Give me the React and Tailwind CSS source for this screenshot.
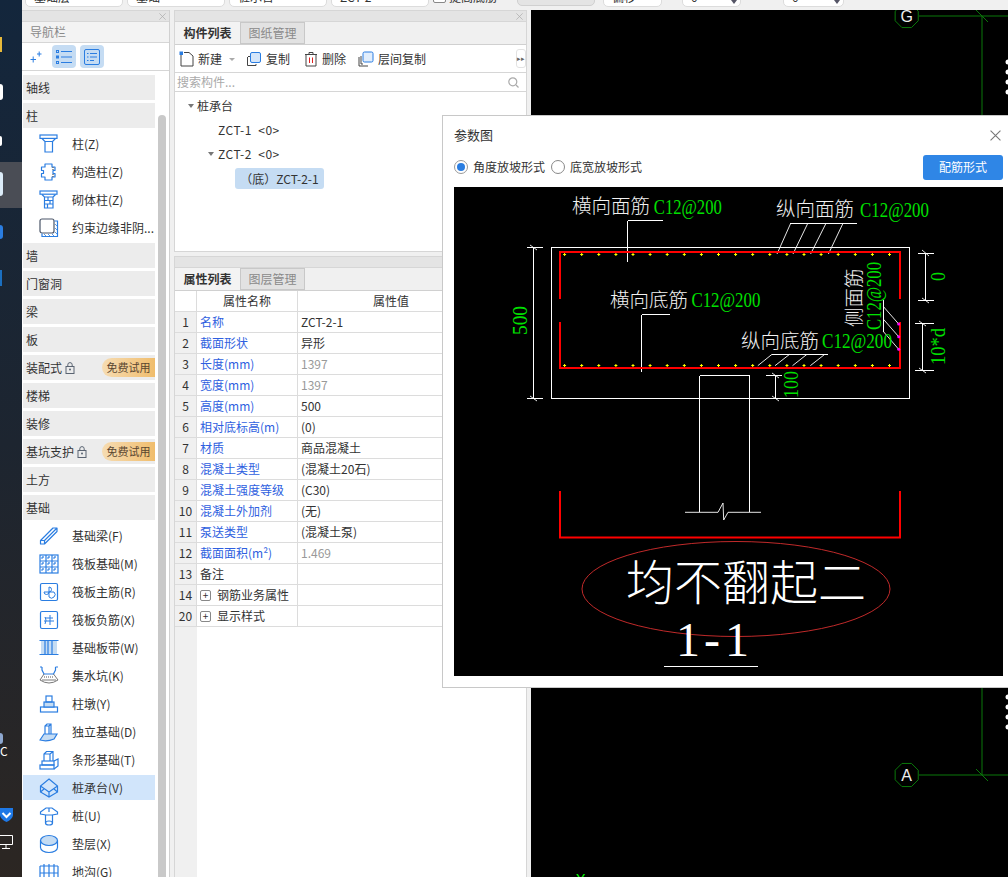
import React from "react";

const CN = "[font-family:'Noto_Sans_CJK_SC','Noto_Sans',sans-serif]";
const B = "#2a7de1";

const Svg = ({ children }) => (
  <svg width="20" height="20" viewBox="0 0 20 20" fill="none" stroke={B} strokeWidth="1.2" className="shrink-0">
    {children}
  </svg>
);

const icons = {
  zhu: (
    <Svg>
      <rect x="1" y="1" width="17" height="3.4" />
      <path d="M3 4.5 L6 7.5 V18 H13.5 V7.5 L16.5 4.5 M6 7.5 H13.5" />
    </Svg>
  ),
  gouzao: (
    <Svg>
      <path d="M6 2 H13 V5 H16 V8.5 H14 V11.5 H16 V15 H13 V18 H6 V15 H2.5 V11.5 H4.5 V8.5 H2.5 V5 H6 Z" strokeLinejoin="round" />
      <path d="M14 5 V8 M14 12 V15" stroke="#555" strokeDasharray="1 1" />
    </Svg>
  ),
  qiti: (
    <Svg>
      <rect x="1" y="1" width="17" height="3.2" />
      <path d="M3 4.5 L5.5 7 V18 H14 V7 L16.5 4.5 M5.5 7 H14 M5.5 10.5 H14 M5.5 14 H14 M9 7 V10.5 M11 10.5 V14 M8.5 14 V18" />
    </Svg>
  ),
  yueshu: (
    <Svg>
      <rect x="1" y="1" width="14" height="14" rx="2" stroke="#4a5568" />
      <path d="M15.5 3 H18.5 V18.5 H3 V15.5" />
      <path d="M16 6 L18 8 M16 10 L18 12 M16 14 L18 16 M5 16 L7 18 M9 16 L11 18 M13 16 L15 18" strokeWidth="0.8" />
    </Svg>
  ),
  liang: (
    <Svg>
      <path d="M1.5 14.5 L14 2 L18 2 L18 5.5 L5.5 18 H1.5 Z M1.5 14.5 H5.5 V18 M5.5 14.5 L18 2 M6 10 L12 4" strokeLinejoin="round" />
    </Svg>
  ),
  fa: (
    <Svg>
      <rect x="1" y="1" width="18" height="18" />
      <path d="M1 7 H19 M1 13 H19 M7 1 V19 M13 1 V19" />
      <path d="M4 1 V19 M10 1 V19 M16 1 V19 M1 4 H19 M1 10 H19 M1 16 H19" strokeDasharray="2 4" strokeDashoffset="-1" />
    </Svg>
  ),
  zhu2: (
    <Svg>
      <rect x="1.5" y="1.5" width="17" height="17" rx="1.5" />
      <path d="M10 5 V15 M5 10 H15 M10 5 A2.5 2.5 0 0 1 10 10 M10 10 A2.5 2.5 0 0 1 5 10 M15 10 A2.5 2.5 0 0 1 10 15" strokeWidth="1" />
    </Svg>
  ),
  fu: (
    <Svg>
      <rect x="1.5" y="1.5" width="17" height="17" rx="1.5" />
      <path d="M11 5 V15 M6 8 H14 M5 11 H15 M6 7 Q8 10 6 14" strokeWidth="1" />
    </Svg>
  ),
  dai: (
    <Svg>
      <rect x="2" y="3" width="16" height="13" fill="#c5dcf3" stroke="none" />
      <path d="M0.5 2.5 H19.5 M0.5 16.5 H19.5 M6 3 V16 M9 3 V16 M13 3 V16" />
    </Svg>
  ),
  keng: (
    <Svg>
      <path d="M3 1 V4 L5 8 H14.5 L16.5 4 V1 M3 1 H1 M16.5 1 H19" />
      <path d="M5 8 L1 14 M14.5 8 L19 14 M1 14 Q10 20 19 14 M3 14 H17" stroke="#555" strokeWidth="0.8" />
      <path d="M5 11 H15" stroke="#555" strokeDasharray="1 1" />
    </Svg>
  ),
  dun: (
    <Svg>
      <rect x="1.5" y="13" width="17" height="5" />
      <rect x="5" y="8" width="10" height="5" fill="#c5dcf3" />
      <rect x="7" y="2" width="6" height="6" />
    </Svg>
  ),
  duli: (
    <Svg>
      <path d="M6 12 V4 L8 2 H12 V12 M6 4 H10 V12 M10 4 L12 2" />
      <path d="M1 18 L5 12 H18 L15 17 Q8 20 1 18 Z" fill="#c5dcf3" />
    </Svg>
  ),
  tiao: (
    <Svg>
      <path d="M5 11 V4 L7.5 1.5 H14 V11 M5 4 H11 V11 M11 4 L14 1.5" />
      <rect x="3" y="11" width="12" height="4" />
      <rect x="1" y="15" width="14" height="4" />
      <path d="M15 11 L19 9 V16 L15 19" />
    </Svg>
  ),
  cheng: (
    <Svg>
      <path d="M10 1 L18.5 8 V14 L10 19 L1.5 14 V8 Z M1.5 8 L10 14 L18.5 8 M10 14 V19.5" />
      <path d="M1.5 14 L5 11 M18.5 14 L15 11" />
    </Svg>
  ),
  zhuang: (
    <Svg>
      <path d="M1.5 6 L7 2 H13 L18.5 6 V8 L13 9 H7 L1.5 8 Z M10 2 V6" />
      <path d="M6.5 9 V17 M13.5 9 V17" />
      <ellipse cx="10" cy="17" rx="3.5" ry="2" />
    </Svg>
  ),
  dian: (
    <Svg>
      <ellipse cx="10" cy="6.5" rx="8.5" ry="5" fill="#c5dcf3" />
      <path d="M1.5 6.5 V13.5 C1.5 16 5 18.5 10 18.5 C15 18.5 18.5 16 18.5 13.5 V6.5" />
    </Svg>
  ),
  gou: (
    <Svg>
      <path d="M1 4 H19 M1 4 V19 M19 4 V19 M1 11 H19 M5 2 V19 M10 2 V19 M15 2 V19" />
    </Svg>
  ),
};

const nav = [
  { h: "轴线" },
  { h: "柱" },
  { t: "柱(Z)", i: "zhu" },
  { t: "构造柱(Z)", i: "gouzao" },
  { t: "砌体柱(Z)", i: "qiti" },
  { t: "约束边缘非阴...", i: "yueshu" },
  { h: "墙" },
  { h: "门窗洞" },
  { h: "梁" },
  { h: "板" },
  { h: "装配式", trial: true },
  { h: "楼梯" },
  { h: "装修" },
  { h: "基坑支护", trial: true },
  { h: "土方" },
  { h: "基础" },
  { t: "基础梁(F)", i: "liang" },
  { t: "筏板基础(M)", i: "fa" },
  { t: "筏板主筋(R)", i: "zhu2" },
  { t: "筏板负筋(X)", i: "fu" },
  { t: "基础板带(W)", i: "dai" },
  { t: "集水坑(K)", i: "keng" },
  { t: "柱墩(Y)", i: "dun" },
  { t: "独立基础(D)", i: "duli" },
  { t: "条形基础(T)", i: "tiao" },
  { t: "桩承台(V)", i: "cheng", active: true },
  { t: "桩(U)", i: "zhuang" },
  { t: "垫层(X)", i: "dian" },
  { t: "地沟(G)", i: "gou" },
];

const props = [
  ["1", "名称", "ZCT-2-1", 1],
  ["2", "截面形状", "异形", 1],
  ["3", "长度(mm)", "1397", 1, true],
  ["4", "宽度(mm)", "1397", 1, true],
  ["5", "高度(mm)", "500", 1],
  ["6", "相对底标高(m)", "(0)", 1],
  ["7", "材质", "商品混凝土", 1],
  ["8", "混凝土类型", "(混凝土20石)", 1],
  ["9", "混凝土强度等级", "(C30)", 1],
  ["10", "混凝土外加剂", "(无)", 1],
  ["11", "泵送类型", "(混凝土泵)", 1],
  ["12", "截面面积(m²)", "1.469", 1, true],
  ["13", "备注", "", 0],
  ["14", "钢筋业务属性", "", 0, false, true],
  ["20", "显示样式", "", 0, false, true],
];

const Lock = () => (
  <svg width="10" height="12" viewBox="0 0 10 12" fill="none" stroke="#5a6472" strokeWidth="1" className="ml-[3px]">
    <rect x="1" y="4.5" width="8" height="7" />
    <path d="M2.8 4.5 V2.8 A2.2 2.2 0 0 1 7.2 2.8 V4.5" />
    <circle cx="5" cy="7.5" r="1" fill="#5a6472" stroke="none" />
  </svg>
);

const NavRow = ({ row }) => {
  if (row.h) {
    return (
      <div className="mb-[3px] flex h-[25px] items-center bg-[#ececec] pl-[3px] text-[12px] text-[#333]">
        <span>{row.h}</span>
        {row.trial && <Lock />}
        {row.trial && (
          <span className="ml-auto flex h-[19px] w-[53px] items-center justify-center rounded-l-full bg-gradient-to-r from-[#f6dcb2] to-[#f0bd6c] text-[11px] text-[#5a4630]">
            免费试用
          </span>
        )}
      </div>
    );
  }
  return (
    <div className={`mb-[3px] flex h-[25px] items-center pl-[16px] text-[12px] text-[#333] ${row.active ? "bg-[#d1e5fb]" : ""}`}>
      {icons[row.i]}
      <span className="ml-[13px] whitespace-nowrap">{row.t}</span>
    </div>
  );
};

const X = ({ size = 10, color = "#aaa" }) => (
  <svg width={size} height={size} viewBox="0 0 10 10" stroke={color} strokeWidth="1">
    <path d="M0.5 0.5 L9.5 9.5 M9.5 0.5 L0.5 9.5" />
  </svg>
);

const Strip = () => (
  <div className="flex h-[12px] items-center justify-end border-y border-[#d6d6d6] bg-[#e4e4e4] pr-[3px]">
    <X size={7} />
  </div>
);

const Tabs = ({ a, b }) => (
  <div className="flex h-[23px] border-b border-[#d0d0d0] bg-[#f0f0f0] text-[12px]">
    <div className="flex w-[65px] items-center justify-center bg-[#f3f3f3] font-bold text-[#333]">{a}</div>
    <div className="flex w-[65px] items-center justify-center border border-[#c8c8c8] bg-[#e2e2e2] text-[#8a8a8a]">{b}</div>
  </div>
);

const TBtn = ({ icon, label, className = "" }) => (
  <div className={`flex items-center text-[12px] text-[#333] ${className}`}>
    {icon}
    <span className="ml-[4px]">{label}</span>
  </div>
);

const CopyIcon = (
  <svg width="16" height="16" viewBox="0 0 16 16" fill="none" strokeWidth="1">
    <path d="M2 5.5 H4 M1.5 6 V14.5 H10 V13" stroke="#444" />
    <rect x="4.5" y="1.5" width="10" height="10" rx="1.5" fill="#d5e6fa" stroke={B} />
  </svg>
);

const FloorCopy = (
  <svg width="16" height="16" viewBox="0 0 16 16" fill="none" strokeWidth="1">
    <path d="M1 6 V15 H10 M3 5 V13 H5" stroke="#444" />
    <rect x="5" y="1" width="10" height="10" rx="1.5" fill="#e2eefc" stroke={B} />
  </svg>
);

const CadText = ({ x, y, len, size = 21, rot, children, fill = "#00e000" }) => (
  <text
    x={x}
    y={y}
    fill={fill}
    fontSize={size}
    fontFamily="'Liberation Serif', serif"
    textLength={len}
    lengthAdjust="spacingAndGlyphs"
    transform={rot ? `rotate(-90 ${x} ${y})` : undefined}
  >
    {children}
  </text>
);

const CnText = ({ x, y, rot, size = 19.5, children }) => (
  <text
    x={x}
    y={y}
    fill="#f2f2f2"
    fontSize={size}
    fontWeight="300"
    fontFamily="'Noto Sans CJK SC', sans-serif"
    transform={rot ? `rotate(-90 ${x} ${y})` : undefined}
  >
    {children}
  </text>
);

const dots = Array.from({ length: 20 }, (_, i) => 564.6 + i * 17.1);

const Drawing = () => (
  <svg className="block h-[489px] w-[549px] bg-black" viewBox="454 187 549 489">
    <g stroke="#fff" strokeWidth="1" fill="none" shapeRendering="crispEdges">
      <rect x="551.5" y="247.5" width="358" height="151" />
      <path d="M627.5 220.5 H663 M627.5 220.5 V262" />
      <path d="M790 223.5 H857" />
      <path d="M641.5 314.5 H670 M641.5 314.5 V372" />
      <path d="M772 354.5 H828" />
      <path d="M883.5 300 V332" />
      <path d="M533.5 247 V398 M527 247.5 H543 M527 398.5 H543" />
      <path d="M925.5 253 V300 M918 253.5 H934 M918 300.5 H934" />
      <path d="M922.5 323 V371 M915 323.5 H934 M915 370.5 H934" />
      <path d="M775.5 375 V398 M766 375.5 H782" />
      <path d="M699.5 375.5 H750 M699.5 375.5 V512 M749.5 375.5 V512" />
      <path d="M664 666.5 H758" />
    </g>
    <g stroke="#fff" strokeWidth="0.9" fill="none">
      <path d="M790.7 223.3 L777 254 M807.8 223.3 L793 254 M826 223.3 L810.6 254 M843 223.3 L828.4 254" />
      <path d="M772 354.3 L757.8 365.7 M789.6 354.3 L775 365.7 M807 354.3 L792.5 365.7 M824.8 354.3 L810.3 365.7" />
      <path d="M883.5 306.7 L898.7 324 M883.5 319.3 L898.7 336.7 M883.5 331.7 L898.7 349.3" />
      <path d="M530 245 L537 250 M530 396 L537 401 M922 250 L929 256 M922 298 L929 303 M919 321 L926 326 M919 368 L926 373 M772 373 L779 378 M772 396 L779 401" />
      <path d="M685 512.3 H718 L723 503 L723.7 520 L728 512.3 H761" />
    </g>
    <g stroke="#ff0000" strokeWidth="2" fill="none">
      <path d="M560 299 V252 H900 V299" />
      <path d="M560 322 V368 H900 V322" />
      <path d="M560 491 V537.5 H900 V491" />
    </g>
    {dots.map((x) => (
      <g key={x} stroke="#ffff00" strokeWidth="1">
        <path d={`M${x - 1.5} 254.5 H${x + 1.5} M${x} 253 V256`} />
        <path d={`M${x - 1.5} 365.5 H${x + 1.5} M${x} 364 V367`} />
      </g>
    ))}
    <circle cx="898.7" cy="324" r="1.5" fill="#ff00ff" />
    <circle cx="898.7" cy="336.7" r="1.5" fill="#ff00ff" />
    <circle cx="898.7" cy="349.3" r="1.5" fill="#ff00ff" />
    <ellipse cx="736" cy="589" rx="154" ry="47.5" fill="none" stroke="#c02a2a" strokeWidth="1" />

    <CnText x={572} y={213}>横向面筋</CnText>
    <CadText x={653.8} y={214} len={68}>C12@200</CadText>
    <CnText x={776} y={216}>纵向面筋</CnText>
    <CadText x={860} y={217} len={69}>C12@200</CadText>
    <CnText x={610} y={307}>横向底筋</CnText>
    <CadText x={691.4} y={307} len={69}>C12@200</CadText>
    <CnText x={741} y={348}>纵向底筋</CnText>
    <CadText x={822} y={348} len={70}>C12@200</CadText>
    <CnText x={861} y={327} rot>侧面筋</CnText>
    <CadText x={881} y={330} len={68} rot>C12@200</CadText>
    <CadText x={527} y={335} len={29} rot>500</CadText>
    <CadText x={945} y={281} len={9} rot>0</CadText>
    <CadText x={945} y={365} len={37} rot>10*d</CadText>
    <CadText x={798} y={398} len={27} rot>100</CadText>

    <text x={626} y={600} fill="#fff" fontSize="48" fontWeight="300" textLength={240} fontFamily="'Noto Sans CJK SC', sans-serif">均不翻起二</text>
    <text x="676 704 725" y={656} fill="#fff" fontSize="48" fontFamily="'Liberation Serif', serif">1-1</text>
  </svg>
);

const Axis = ({ cy, label }) => (
  <>
    <polygon
      points={[0, 1, 2, 3, 4, 5, 6, 7]
        .map((i) => {
          const a = (Math.PI / 4) * i + Math.PI / 8;
          return `${906.7 + 12.5 * Math.cos(a)},${cy + 12.5 * Math.sin(a)}`;
        })
        .join(" ")}
      fill="none"
      stroke="#0a780a"
      strokeWidth="1"
    />
    <path d={`M919 ${cy} H1008 M976 ${cy - 6} L988 ${cy + 6}`} stroke="#0a780a" strokeWidth="1" />
    <text x="906.7" y={cy + 6} fill="#eee" fontSize="16" textAnchor="middle" fontFamily="'Liberation Sans', sans-serif">
      {label}
    </text>
  </>
);

const Canvas = () => (
  <div className="min-w-0 flex-1 bg-black">
    <svg className="block h-[867px] w-[477px]" viewBox="531 10 477 867">
      <Axis cy={16} label="G" />
      <Axis cy={775} label="A" />
      <path d="M982 16 V775" stroke="#0a780a" strokeWidth="1" />
      {[62, 72, 82, 92, 697, 707, 717, 727].map((y) => (
        <circle key={y} cx="1008" cy={y} r="2.5" fill="#fff" />
      ))}
      <text x="576" y="884" fill="#00ff00" fontSize="14" fontFamily="'Liberation Sans', sans-serif">Y</text>
    </svg>
  </div>
);

const Field = ({ w, arrow, children }) => (
  <div className={`relative flex h-[22px] shrink-0 items-end overflow-hidden rounded-b-[5px] border border-[#dcdcdc] bg-white pl-[8px] text-[12px] leading-[18px] text-[#333] ${w}`}>
    {children}
    {arrow && <span className="absolute right-[3px] top-[14px] h-0 w-0 border-x-[3px] border-t-[4px] border-x-transparent border-t-[#556]" />}
  </div>
);

const Clipped = ({ w, children }) => (
  <div className={`flex h-[22px] shrink-0 items-end overflow-hidden pl-[3px] text-[12px] leading-[18px] text-[#555] ${w}`}>
    <span className="mb-[4px] whitespace-nowrap">{children}</span>
  </div>
);

const Desktop = () => (
  <div className="relative w-[22px] shrink-0 overflow-hidden bg-gradient-to-b from-[#13263c] via-[#1d2530] to-[#2c2622]">
    <div className="absolute left-0 top-[37px] h-[15px] w-[2px] bg-[#e8b93a]" />
    <div className="absolute left-0 top-[84px] h-[16px] w-[3px] rounded-r bg-white" />
    <div className="absolute left-0 top-[136px] h-[10px] w-[2px] rounded-r bg-white" />
    <div className="absolute top-[162px] h-[46px] w-full bg-[#4a4d55]" />
    <div className="absolute left-0 top-[172px] h-[24px] w-[3px] rounded-r bg-[#dcecf8]" />
    <div className="absolute left-0 top-[225px] h-[14px] w-[3px] rounded-r bg-[#2a7de1]" />
    <div className="absolute left-0 top-[270px] h-[16px] w-[2px] bg-[#1b6fc0]" />
    <div className="absolute left-0 top-[733px] h-[11px] w-[3px] rounded-r bg-[#8da7cf]" />
    <span className="absolute left-0 top-[744px] text-[12px] leading-[14px] text-white">C</span>
    <svg className="absolute left-[-1px] top-[806px]" width="15" height="17" viewBox="0 0 15 17">
      <path d="M1 2 H14 V9 C14 12 10 15 7.5 16 C5 15 1 12 1 9 Z" fill="#1e78e6" />
      <path d="M3.5 7 L7.5 11 L11.5 7" stroke="#fff" strokeWidth="2" fill="none" />
    </svg>
    <svg className="absolute left-0 top-[834px]" width="14" height="16" viewBox="0 0 14 16" fill="none" stroke="#fff" strokeWidth="1">
      <path d="M0 1.5 H12.5 V10.5 H0 M6 11 V14 M2 14.5 H10" />
    </svg>
  </div>
);

const NavPanel = () => (
  <div className="relative flex w-[148px] shrink-0 flex-col overflow-hidden border-r border-[#d0d0d0] bg-white">
    <Strip />
    <div className="flex h-[21px] items-center border-b border-[#d6d6d6] bg-[#f3f3f3] pl-[8px] text-[12px] text-[#8a8a8a]">导航栏</div>
    <div className="flex h-[28px] items-center border-b border-[#d6d6d6] bg-white pl-[8px]">
      <svg width="12" height="12" viewBox="0 0 12 12" stroke={B} strokeWidth="1">
        <path d="M0.5 8.5 H6 M3.2 5.5 V11.5 M7 3 H11.5 M9.2 0.5 V5.5" />
      </svg>
      <div className="ml-[10px] flex h-[23px] w-[24px] items-center justify-center rounded-[4px] bg-[#c5dcf3]">
        <svg width="16" height="14" viewBox="0 0 16 14" fill="none" stroke={B} strokeWidth="1">
          <path d="M5 1.5 H16 M5 7 H16 M5 12.5 H16" />
          <rect x="0.5" y="0.5" width="2" height="2" />
          <rect x="0.5" y="6" width="2" height="2" />
          <rect x="0.5" y="11.5" width="2" height="2" />
        </svg>
      </div>
      <div className="ml-[4px] flex h-[23px] w-[24px] items-center justify-center rounded-[4px] bg-[#c5dcf3]">
        <svg width="16" height="16" viewBox="0 0 16 16" fill="none" stroke={B} strokeWidth="1">
          <rect x="0.5" y="0.5" width="15" height="15" rx="1.5" />
          <path d="M3 4.5 H4.5 M6 4.5 H13 M3 8 H4.5 M6 8 H13 M3 11.5 H4.5 M6 11.5 H10" />
        </svg>
      </div>
    </div>
    <div className="mt-[4px] w-[133px] pl-[1px]">
      {nav.map((row) => (
        <NavRow key={row.h || row.t} row={row} />
      ))}
    </div>
    <div className="absolute bottom-0 left-[136px] top-[105px] w-[8px] rounded-t-full bg-[#c9c9c9]" />
  </div>
);

const PropRow = ({ p }) => (
  <div className="flex h-[21px] border-b border-[#dcdcdc] text-[12px]">
    <div className="flex w-[22px] items-center justify-center border-r border-[#dcdcdc] bg-[#f0f0f0] text-[#333]">{p[0]}</div>
    <div className={`flex w-[101px] items-center border-r border-[#dcdcdc] pl-[3px] ${p[3] ? "text-[#2f5fe0]" : "text-[#333]"}`}>
      {p[5] && (
        <span className="mr-[6px] flex h-[11px] w-[11px] items-center justify-center rounded-[2px] border border-[#888] text-[10px] leading-none">+</span>
      )}
      {p[1]}
    </div>
    <div className={`flex flex-1 items-center pl-[3px] ${p[4] ? "text-[#999]" : "text-[#333]"}`}>{p[2]}</div>
  </div>
);

const MidPanel = () => (
  <div className="ml-[4px] flex w-[353px] shrink-0 flex-col">
    <div className="flex h-[242px] flex-col border-x border-b border-[#d6d6d6] bg-white">
      <Strip />
      <Tabs a="构件列表" b="图纸管理" />
      <div className="flex h-[28px] shrink-0 items-center border-b border-[#d6d6d6] pl-[4px]">
        <TBtn
          label="新建"
          icon={
            <svg width="15" height="16" viewBox="0 0 15 16" fill="none">
              <path d="M2 4 V15 H14 V5 L10 1.5 H5" stroke="#444" />
              <rect x="0.5" y="0.5" width="3.5" height="3.5" fill="#2a7de1" />
            </svg>
          }
        />
        <span className="ml-[7px] mt-[1px] h-0 w-0 border-x-[3px] border-t-[3px] border-x-transparent border-t-[#aaa]" />
        <TBtn label="复制" icon={CopyIcon} className="ml-[11px]" />
        <TBtn
          label="删除"
          className="ml-[14px]"
          icon={
            <svg width="14" height="16" viewBox="0 0 14 16" fill="none" stroke="#444">
              <path d="M1 3.5 H13 M5 3.5 V1.5 H9 V3.5 M2 3.5 V15 H12 V3.5" />
              <path d="M5.5 6.5 V12 M8.5 6.5 V12" stroke="#e02020" />
            </svg>
          }
        />
        <TBtn label="层间复制" icon={FloorCopy} className="ml-[12px]" />
        <div className="ml-auto flex h-[19px] w-[10px] items-center justify-center rounded-[3px] border border-[#e2e2e2] text-[7px] text-[#666]">▸▸</div>
      </div>
      <div className="flex h-[19px] shrink-0 items-center justify-between border-b border-[#d6d6d6] pl-[2px] pr-[7px] text-[12px] text-[#aaa]">
        <span>搜索构件...</span>
        <svg width="11" height="11" viewBox="0 0 11 11" fill="none" stroke="#aaa" strokeWidth="1.2">
          <circle cx="4.8" cy="4.8" r="4" />
          <path d="M8 8 L10.5 10.5" />
        </svg>
      </div>
      <div className="pt-[2px] text-[12px] text-[#333]">
        <div className="flex h-[24px] items-center pl-[13px]">
          <span className="mr-[3px] h-0 w-0 border-x-[3px] border-t-[4px] border-x-transparent border-t-[#777]" />
          桩承台
        </div>
        <div className="flex h-[24px] items-center pl-[43px] tracking-[0.5px]">ZCT-1&nbsp; &lt;0&gt;</div>
        <div className="flex h-[24px] items-center pl-[33px] tracking-[0.5px]">
          <span className="mr-[4px] h-0 w-0 border-x-[3px] border-t-[4px] border-x-transparent border-t-[#777]" />
          ZCT-2&nbsp; &lt;0&gt;
        </div>
        <div className="ml-[60px] mt-[2px] flex h-[21px] w-[89px] items-center justify-center rounded-[3px] bg-[#c5dcf3]">（底）ZCT-2-1</div>
      </div>
    </div>
    <div className="mt-[4px] flex flex-1 flex-col border-x border-[#d6d6d6] bg-white">
      <Strip />
      <Tabs a="属性列表" b="图层管理" />
      <div className="flex h-[21px] border-b border-[#dcdcdc] text-[12px] text-[#333]">
        <div className="w-[22px] border-r border-[#dcdcdc]" />
        <div className="flex w-[101px] items-center justify-center border-r border-[#dcdcdc]">属性名称</div>
        <div className="flex w-[186px] items-center justify-center">属性值</div>
      </div>
      {props.map((p) => (
        <PropRow key={p[0]} p={p} />
      ))}
      <div className="w-[22px] flex-1 bg-[#f0f0f0]" />
    </div>
  </div>
);

const Radio = ({ on, label }) => (
  <div className="flex items-center">
    <span className={`flex h-[14px] w-[14px] items-center justify-center rounded-full border ${on ? "border-[#999]" : "border-[#888]"}`}>
      {on && <span className="h-[8px] w-[8px] rounded-full bg-[#2a7de1]" />}
    </span>
    <span className="ml-[5px]">{label}</span>
  </div>
);

const ParamDialog = () => (
  <div className="absolute left-[442px] top-[115px] h-[573px] w-[566px] border-y border-l border-[#c8c8c8] bg-white pl-[11px] pr-[5px] text-[12px] text-[#333]">
    <div className="flex h-[38px] items-center justify-between pr-[2px]">
      <span className="text-[13px]">参数图</span>
      <X size={11} color="#777" />
    </div>
    <div className="mb-[7px] flex h-[26px] items-center">
      <Radio on label="角度放坡形式" />
      <div className="ml-[6px]">
        <Radio label="底宽放坡形式" />
      </div>
      <div className="ml-auto flex h-[25px] w-[80px] items-center justify-center rounded-[3px] bg-[#2f86e6] text-white">配筋形式</div>
    </div>
    <Drawing />
  </div>
);

const TopBar = () => (
  <div className="flex h-[10px] items-end overflow-hidden bg-[#f0f0f0] pb-[3px] pl-[3px]">
    <div className="flex items-end gap-[4px]">
      <Field w="w-[98px]">基础层</Field>
      <Field w="w-[98px]">基础</Field>
      <Field w="w-[98px]">桩承台</Field>
      <Field w="w-[98px]">ZCT-2</Field>
      <div className="flex h-[22px] w-[80px] shrink-0 items-end gap-[3px] text-[12px] leading-[18px] text-[#333]">
        <span className="mb-[4px] h-[14px] w-[13px] shrink-0 rounded-[2px] border border-[#888] bg-white" />
        <span className="mb-[1px] whitespace-nowrap">提高底筋</span>
      </div>
      <div className="mb-[1px] h-[22px] w-[78px] shrink-0 rounded-b-[5px] border border-[#d0d0d0] bg-[#e4e4e4]" />
      <div className="ml-[4px]">
        <Field w="w-[59px]">偏移</Field>
      </div>
      <Clipped w="w-[12px]">上</Clipped>
      <Field w="w-[59px]" arrow>0</Field>
      <Clipped w="w-[34px]">左偏移</Clipped>
      <Field w="w-[61px]" arrow>0</Field>
      <Clipped w="w-[40px]">右偏移</Clipped>
    </div>
  </div>
);

export default function App() {
  return (
    <div className={`relative flex h-[877px] w-[1008px] flex-col overflow-hidden bg-[#f0f0f0] ${CN}`}>
      <div className="flex flex-1">
        <Desktop />
        <div className="flex min-w-0 flex-1 flex-col">
          <TopBar />
          <div className="flex min-h-0 flex-1">
            <NavPanel />
            <MidPanel />
            <div className="w-[4px] shrink-0" />
            <Canvas />
          </div>
        </div>
      </div>
      <ParamDialog />
    </div>
  );
}
